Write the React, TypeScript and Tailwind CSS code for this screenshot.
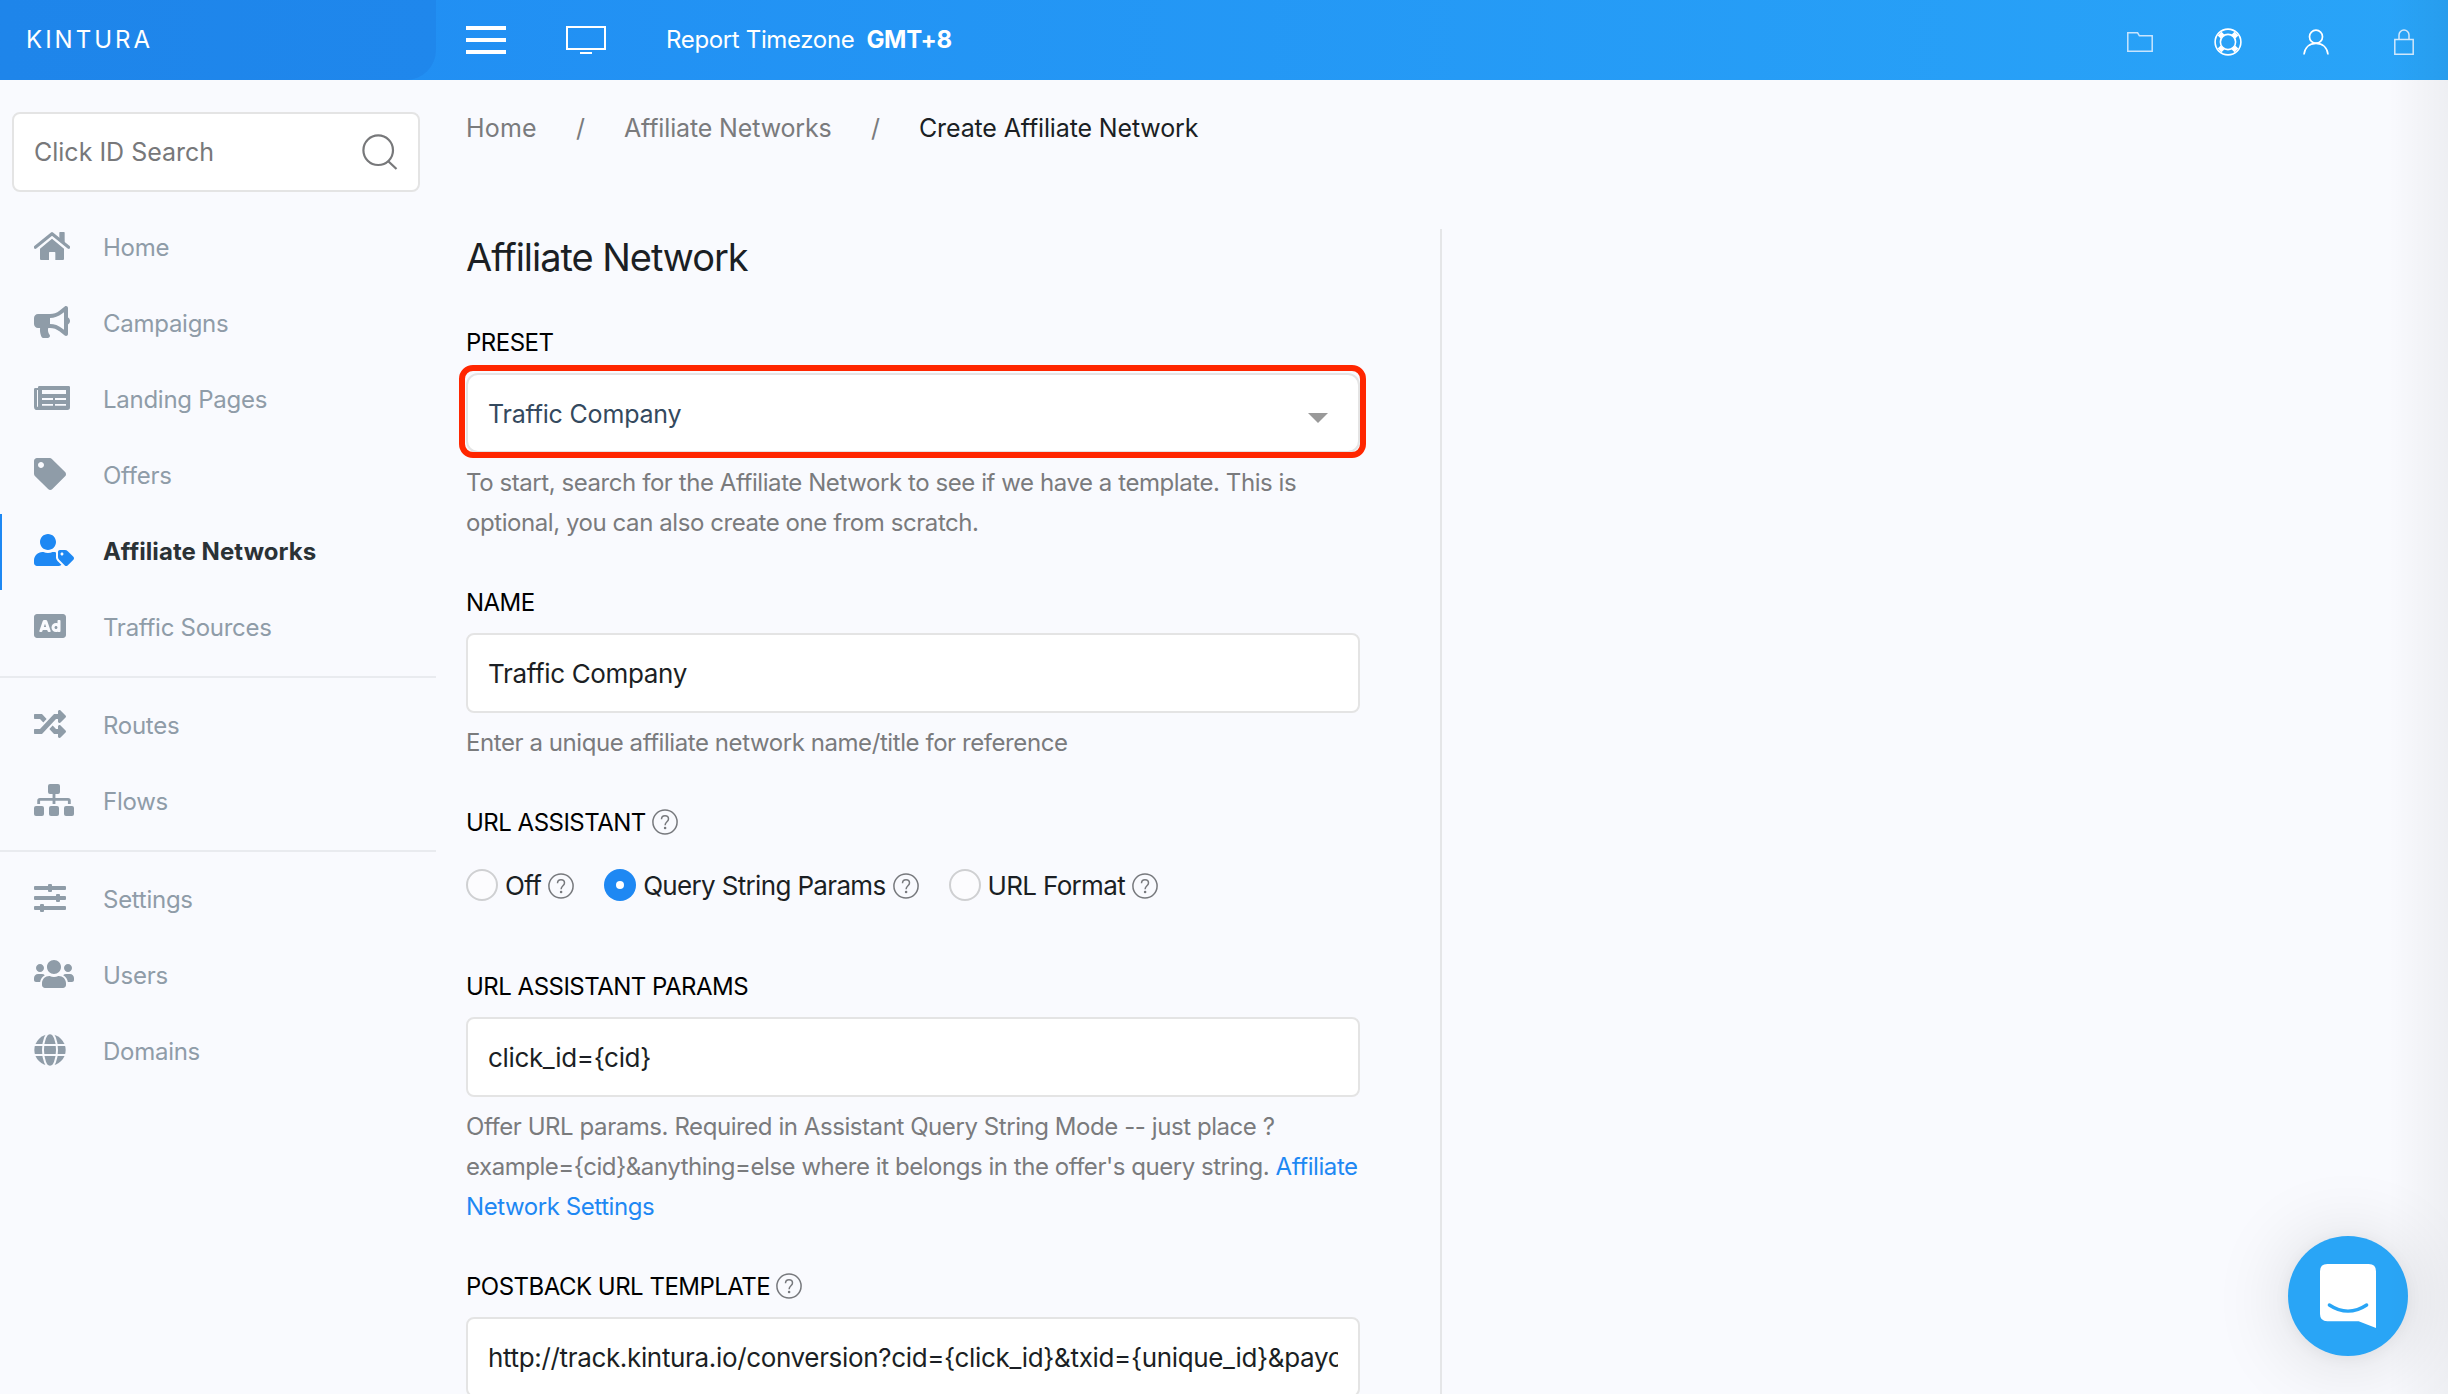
import type { ReactNode } from "react";
import { FaBullhorn, FaTag, FaUserTag, FaAd, FaRandom, FaUsers } from "react-icons/fa";

function HomeIcon() {
  return (
    <svg viewBox="102 36 108 84" className="h-[28px] w-[36px]" fill="currentColor">
      <path d="M106 82L156 41L206 82" fill="none" stroke="currentColor" strokeWidth="9.5" strokeLinecap="round" strokeLinejoin="round" />
      <path d="M178 38q0-2 2-2h12q2 0 2 2v32l-16-13z" />
      <path d="M156 56L192 86V117q0 3-3 3H166V98q0-2-2-2H149q-2 0-2 2V120H123q-3 0-3-3V86z" />
    </svg>
  );
}

function NewspaperIcon() {
  return (
    <svg viewBox="102 498 108 72" className="h-[24px] w-[36px]" fill="currentColor" fillRule="evenodd">
      <path d="M118 498H206q4 0 4 4V562q0 8-8 8H112q-10 0-10-10V508q0-4 4-4H114V502q0-4 4-4zM111 510V560h3V510zM126 510V522H198V510zM126 534V540H159V534zM165 534V540H198V534zM126 552V557H159V552zM165 552V557H198V552z" />
    </svg>
  );
}

function FlowsIcon() {
  return (
    <svg viewBox="102 102 120 96" className="h-[32px] w-[40px]" fill="currentColor">
      <rect x="144" y="102" width="36" height="30" rx="6" />
      <rect x="102" y="168" width="30" height="30" rx="6" />
      <rect x="147" y="168" width="30" height="30" rx="6" />
      <rect x="192" y="168" width="30" height="30" rx="6" />
      <path d="M162 130V162M116 162V152q0-4 4-4H204q4 0 4 4V162" fill="none" stroke="currentColor" strokeWidth="8.5" />
    </svg>
  );
}

function SlidersIcon() {
  return (
    <svg viewBox="102 402 96 84" className="h-[28px] w-[32px]" fill="currentColor">
      <rect x="102" y="408" width="96" height="12" rx="3" />
      <rect x="102" y="438" width="96" height="12" rx="3" />
      <rect x="102" y="468" width="96" height="12" rx="3" />
      <rect x="144" y="402" width="12" height="24" rx="3" />
      <rect x="168" y="432" width="12" height="24" rx="3" />
      <rect x="120" y="462" width="12" height="24" rx="3" />
    </svg>
  );
}

function GlobeIcon() {
  return (
    <svg viewBox="102 852 96 96" className="size-[32px]">
      <circle cx="150" cy="900" r="47" fill="currentColor" />
      <g fill="none" stroke="#f9fafe" strokeWidth="6">
        <path d="M102 885H198M102 915H198" />
        <ellipse cx="150" cy="900" rx="21" ry="51" />
      </g>
    </svg>
  );
}

function HelpIcon() {
  return (
    <svg viewBox="0 0 26 26" className="size-[26px] shrink-0" fill="none" stroke="#77797d" strokeWidth="1.5">
      <circle cx="13" cy="13" r="12.1" />
      <path d="M9.5 10.3C9.5 8 11 6.8 13 6.8s3.5 1.2 3.5 3.2c0 2.8-3.4 2.8-3.4 6.2" />
      <circle cx="13.1" cy="19" r="1.3" fill="#77797d" stroke="none" />
    </svg>
  );
}

function NavItem({ icon, label, active }: { icon: ReactNode; label: string; active?: boolean }) {
  return (
    <a
      className={
        active
          ? "flex h-[76px] items-center border-l-2 border-[#1e88f3] pl-8 text-[24px] font-bold tracking-[0.06px] text-[#2b3236]"
          : "flex h-[76px] items-center border-l-2 border-transparent pl-8 text-[24px] tracking-[-0.27px] text-[#8f9ca8]"
      }
    >
      <span className={active ? "-mt-1 flex w-[69px] items-center text-[#1e88f3]" : "-mt-1 flex w-[69px] items-center"}>{icon}</span>
      <span>{label}</span>
    </a>
  );
}

function Label({ children, help }: { children: ReactNode; help?: boolean }) {
  return (
    <div className="flex h-10 items-center gap-[6px] text-[24px] leading-10 tracking-[-0.51px] whitespace-nowrap text-black">
      <span className="translate-y-px">{children}</span>
      {help && <HelpIcon />}
    </div>
  );
}

function Field({ value }: { value: string }) {
  return (
    <div className="mt-[11px] flex h-20 items-center rounded-[8px] border-2 border-[#e4e4e4] bg-white px-5">
      <div className="w-full translate-y-px overflow-hidden text-[26px] leading-10 tracking-[-0.34px] whitespace-nowrap text-[#1b1f24]">{value}</div>
    </div>
  );
}

function Help({ children }: { children: ReactNode }) {
  return <div className="mt-[10px] -mb-px text-[24px] leading-10 tracking-[-0.43px] whitespace-nowrap text-[#7a7b7d]">{children}</div>;
}

function Radio({ label, checked }: { label: string; checked?: boolean }) {
  return (
    <div className="flex items-center gap-[7px]">
      {checked ? (
        <span className="flex size-8 items-center justify-center rounded-full bg-[#1e88f3]">
          <span className="size-2 rounded-full bg-white" />
        </span>
      ) : (
        <span className="size-8 rounded-full border-2 border-[#cfd0d2] bg-[#fcfcfe]" />
      )}
      <span className="translate-y-px text-[26px] leading-10 tracking-[-0.66px] whitespace-nowrap text-[#1b1f24]">{label}</span>
      <span className="mt-[2px]"><HelpIcon /></span>
    </div>
  );
}

function Header() {
  return (
    <header className="flex h-20 shrink-0 bg-gradient-to-r from-[#208bf2] to-[#29a4f8] text-white">
      <div className="flex w-[436px] shrink-0 items-center rounded-br-[30px] bg-gradient-to-r from-[#1e85ea] to-[#1f87ec] pl-[26px] text-[24px] tracking-[3px]">
        KINTURA
      </div>
      <div className="flex flex-1 items-center">
        <svg viewBox="0 0 40 28" className="ml-[30px] h-[28px] w-[40px]" fill="currentColor">
          <path d="M0 0h40v4H0zM0 12h40v4H0zM0 24h40v4H0z" />
        </svg>
        <svg viewBox="0 0 40 28" className="ml-[60px] h-[28px] w-[40px]" fill="none" stroke="currentColor" strokeWidth="2">
          <path d="M1 1h38v22H1zM14 27h12" />
        </svg>
        <div className="ml-[60px] text-[24px] tracking-[-0.35px]">Report Timezone</div>
        <div className="ml-[12px] text-[24px] font-bold tracking-[-0.3px]">GMT+8</div>
        <div className="mt-1 ml-auto flex items-center pr-[34px]">
          <svg viewBox="0 0 26 20" className="h-[20px] w-[26px]" fill="none" stroke="#c9e5fd" strokeWidth="1.5">
            <path d="M.8.8h9.8l1.8 3h12.8v15.4H.8z" />
          </svg>
          <svg viewBox="0 0 28 28" className="ml-[61px] size-[28px]" fill="none" stroke="currentColor">
            <circle cx="14" cy="14" r="12.9" strokeWidth="1.6" />
            <circle cx="14" cy="14" r="7.6" strokeWidth="1.6" />
            <path d="M5.6 5.6l3 3M22.4 5.6l-3 3M5.6 22.4l3-3M22.4 22.4l-3-3" strokeWidth="5.5" />
          </svg>
          <svg viewBox="0 0 26 26" className="ml-[61px] size-[26px]" fill="none" stroke="currentColor" strokeWidth="1.7">
            <circle cx="13" cy="7.7" r="6.5" />
            <path d="M1 25.5C1.8 18.5 6.5 14.3 13 14.3s11.2 4.2 12 11.2" />
          </svg>
          <svg viewBox="0 0 20 26" className="ml-[65px] h-[26px] w-[20px]" fill="none" stroke="#d4eafd" strokeWidth="1.5">
            <path d="M.8 10.6h18.4v14.6H.8zM5 10.5V6a5 5 0 0 1 10 0v4.5" />
          </svg>
        </div>
      </div>
    </header>
  );
}

function Sidebar() {
  return (
    <aside className="flex w-[436px] shrink-0 flex-col pt-8">
      <div className="ml-3 flex h-20 w-[408px] items-center justify-between rounded-[8px] border-2 border-[#e4e4e4] bg-white pr-[20px] pl-5">
        <span className="translate-y-px text-[25px] text-[#77787a]">Click ID Search</span>
        <svg viewBox="0 0 36 36" className="size-[36px]" fill="none" stroke="#77787a" strokeWidth="2.2">
          <circle cx="16.2" cy="16.2" r="14.8" />
          <path d="M26 27l8.5 8" />
        </svg>
      </div>
      <nav className="mt-[18px]">
        <NavItem icon={<HomeIcon />} label="Home" />
        <NavItem icon={<FaBullhorn className="h-[32px] w-[36px]" />} label="Campaigns" />
        <NavItem icon={<NewspaperIcon />} label="Landing Pages" />
        <NavItem icon={<FaTag className="size-[32px]" />} label="Offers" />
        <NavItem icon={<FaUserTag className="h-[32px] w-[40px]" />} label="Affiliate Networks" active />
        <NavItem icon={<FaAd className="size-[32px]" />} label="Traffic Sources" />
        <div className="my-[10px] h-[2px] bg-[#e9ebef]" />
        <NavItem icon={<FaRandom className="size-[32px]" />} label="Routes" />
        <NavItem icon={<FlowsIcon />} label="Flows" />
        <div className="my-[10px] h-[2px] bg-[#e9ebef]" />
        <NavItem icon={<SlidersIcon />} label="Settings" />
        <NavItem icon={<FaUsers className="h-[32px] w-[40px]" />} label="Users" />
        <NavItem icon={<GlobeIcon />} label="Domains" />
      </nav>
    </aside>
  );
}

export default function App() {
  return (
    <div className="relative flex h-[1394px] w-[2448px] flex-col overflow-hidden bg-[#f9fafe] font-['Inter',sans-serif]">
      <Header />
      <div className="flex min-h-0 flex-1">
        <Sidebar />
        <main className="flex min-w-0 flex-1 flex-col pt-7 pl-[30px]">
          <div className="flex h-10 items-center text-[25px] leading-10 tracking-[-0.14px] text-[#7a7b7d]">
            <span className="w-[110px] tracking-[0.2px]">Home</span>
            <span className="w-[48px]">/</span>
            <span className="w-[247px]">Affiliate Networks</span>
            <span className="w-[48px]">/</span>
            <span className="text-[#1b1f24]">Create Affiliate Network</span>
          </div>
          <section className="mt-[81px] flex flex-1 flex-col">
            <div className="w-[976px] flex-1 border-r-2 border-[#e5e6e8] pr-20 pt-1">
              <h1 className="h-12 text-[38px] leading-[48px] tracking-[-1.05px] text-[#1b1f24]">Affiliate Network</h1>
              <div className="mt-[41px]">
                <Label>PRESET</Label>
                <div className="relative mt-[11px] flex h-20 items-center justify-between rounded-[12px] border-2 border-[#e4e4e4] bg-white pr-[30px] pl-5">
                  <span className="translate-y-px text-[25px] leading-10 tracking-[-0.19px] text-[#34495e]">Traffic Company</span>
                  <svg viewBox="0 0 20 10" className="mt-[10px] h-[10px] w-[20px]" fill="#999">
                    <path d="M0 0h20L10 10z" />
                  </svg>
                  <div className="absolute -top-[10px] -right-[8px] -bottom-[7px] -left-[9px] rounded-[14px] border-[6px] border-[#ff2600]" />
                </div>
                <Help>
                  To start, search for the Affiliate Network to see if we have a template. This is
                  <br />
                  optional, you can also create one from scratch.
                </Help>
              </div>
              <div className="mt-10">
                <Label>NAME</Label>
                <Field value="Traffic Company" />
                <Help>Enter a unique affiliate network name/title for reference</Help>
              </div>
              <div className="mt-10">
                <Label help>URL ASSISTANT</Label>
                <div className="mt-[23px] flex h-10 items-center gap-[30px]">
                  <Radio label="Off" />
                  <Radio label="Query String Params" checked />
                  <Radio label="URL Format" />
                </div>
              </div>
              <div className="mt-[61px]">
                <Label>URL ASSISTANT PARAMS</Label>
                <Field value="click_id={cid}" />
                <Help>
                  Offer URL params. Required in Assistant Query String Mode -- just place ?
                  <br />
                  <span className="tracking-[-0.46px]">{"example={cid}&anything=else where it belongs in the offer's query string. "}</span>
                  <a className="text-[#1e88f3]">
                    Affiliate
                    <br />
                    Network Settings
                  </a>
                </Help>
              </div>
              <div className="mt-10 h-[128px] overflow-hidden">
                <Label help>POSTBACK URL TEMPLATE</Label>
                <Field value="http://track.kintura.io/conversion?cid={click_id}&txid={unique_id}&payout={payout}" />
              </div>
            </div>
          </section>
        </main>
      </div>
      <button className="absolute right-[40px] bottom-[38px] size-[120px] rounded-full bg-[#29a5f6] shadow-[0_2px_16px_rgba(0,0,0,0.05),0_4px_80px_rgba(0,0,0,0.14)]">
        <svg viewBox="174 168 360 360" className="size-[120px]">
          <path d="M292 252H416q22 0 22 22V444L386 424H292q-22 0-22-22V274q0-22 22-22z" fill="#fff" />
          <path d="M298 375Q354 412 410 375" fill="none" stroke="#29a5f6" strokeWidth="10" strokeLinecap="round" />
        </svg>
      </button>
      <div className="pointer-events-none absolute inset-y-0 right-0 w-[60px] bg-gradient-to-r from-transparent to-black/[0.045]" />
    </div>
  );
}
